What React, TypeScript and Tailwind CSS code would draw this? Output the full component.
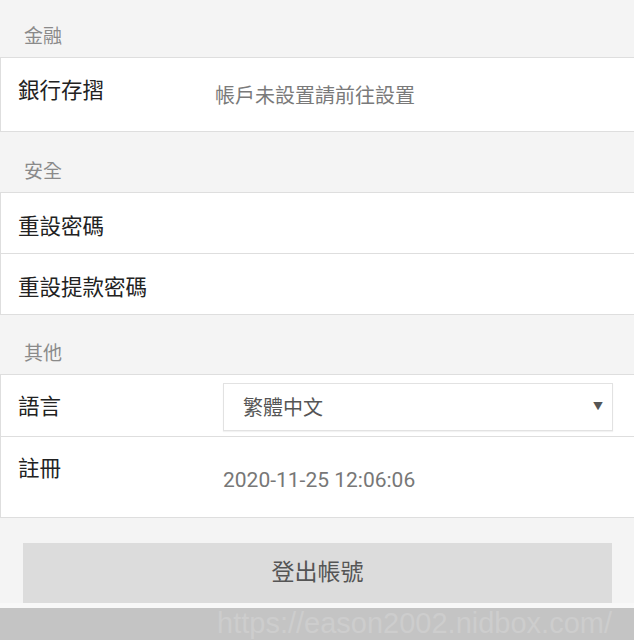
const font = "font-['Roboto','Noto_Sans_CJK_TC',sans-serif]";

function SectionTitle({ title, h }: { title: string; h: string }) {
  return (
    <div className={`${h} flex items-end pl-[24px] pb-[9px] text-[19px] leading-[22px] text-[#8a8a8a]`}>
      {title}
    </div>
  );
}

function Row({ label, h, pt, border = true }: { label: string; h: string; pt: string; border?: boolean }) {
  return (
    <div className={`${h} ${pt} bg-white border-l border-[#dedede] ${border ? "border-t" : ""} pl-[17px] text-[21.5px] leading-[28px] text-[#222]`}>
      {label}
    </div>
  );
}

export default function App() {
  return (
    <div className={`${font} relative h-[640px] w-[634px] overflow-hidden bg-[#f4f4f4]`}>
      <SectionTitle title="金融" h="h-[57px]" />
      <div className="h-[75px] bg-white border-y border-l border-[#dedede] flex">
        <div className="w-[214px] pl-[17px] pt-[19px] text-[21.5px] leading-[28px] text-[#222]">銀行存摺</div>
        <div className="pt-[25px] text-[20px] leading-[26px] text-[#7a7a7a]">帳戶未設置請前往設置</div>
      </div>

      <SectionTitle title="安全" h="h-[60px]" />
      <div className="border-b border-[#dedede]">
        <Row label="重設密碼" h="h-[61px]" pt="pt-[20px]" />
        <Row label="重設提款密碼" h="h-[61px]" pt="pt-[20px]" />
      </div>

      <SectionTitle title="其他" h="h-[59px]" />
      <div className="border-y border-l border-[#dedede]">
        <div className="h-[61px] bg-white flex items-center pt-[2px]">
          <div className="w-[222px] pl-[17px] text-[21.5px] leading-[28px] text-[#222]">語言</div>
          <div className="h-[48px] w-[390px] border border-[#e2e2e2] shadow-[0_1px_1px_rgba(0,0,0,0.05)] flex items-center justify-between pl-[19px] pr-[9px]">
            <span className="pt-[2px] text-[20px] leading-[26px] text-[#555]">繁體中文</span>
            <span className="text-[10px] text-[#555]">▼</span>
          </div>
        </div>
        <div className="h-[81px] bg-white border-t border-[#dedede] flex">
          <div className="w-[222px] pl-[17px] pt-[18px] text-[21.5px] leading-[28px] text-[#222]">註冊</div>
          <div className="pt-[30px] text-[21px] leading-[26px] text-[#777]">2020-11-25 12:06:06</div>
        </div>
      </div>

      <div className="pt-[25px] pl-[23px] pr-[22px]">
        <button className="h-[60px] w-full bg-[#dcdcdc] text-[23px] text-[#555] flex items-center justify-center">
          登出帳號
        </button>
      </div>
      <div className="h-[5px] bg-[#f8f8f8]" />
      <div className="h-[40px] bg-[#c4c4c4] flex items-start justify-end pr-[22px]">
        <span className="font-['Liberation_Sans',sans-serif] text-[29px] leading-[30px] text-[#cdcdcd]">
          https://eason2002.nidbox.com/
        </span>
      </div>
    </div>
  );
}
